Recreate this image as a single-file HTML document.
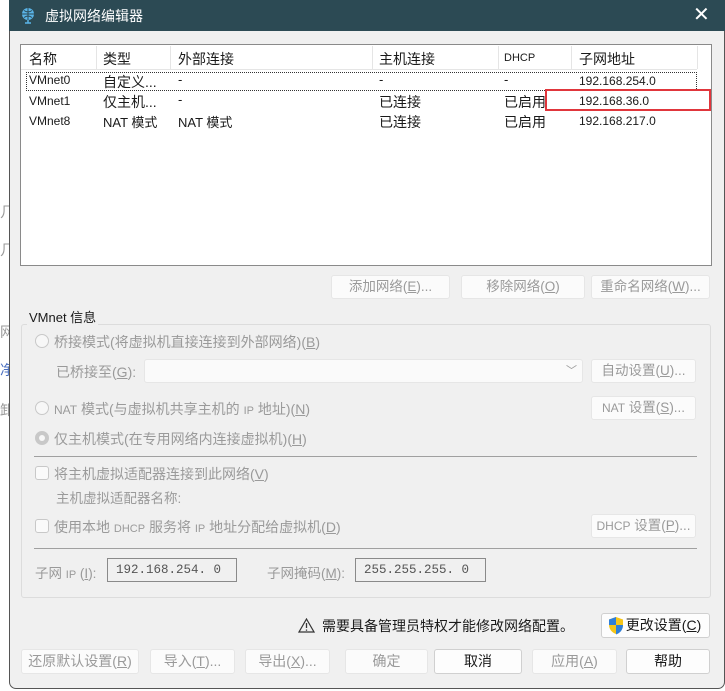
<!DOCTYPE html>
<html><head><meta charset="utf-8"><style>
*{margin:0;padding:0;box-sizing:border-box}
body{width:725px;height:691px;background:#fff;position:relative;overflow:hidden;font-family:"Liberation Sans","Noto Sans CJK SC",sans-serif;font-size:13px;color:#1a1a1a}
.a{position:absolute;white-space:nowrap}
.win{position:absolute;left:9px;top:0;width:716px;height:689px;background:#f0f0f0;border:1px solid #555;border-radius:0 0 7px 7px}
.title{position:absolute;left:9px;top:0;width:716px;height:31px;background:#2c4a54;color:#fff;font-size:14px}
.btn{position:absolute;background:#fbfbfb;border:1px solid #e6e6e6;border-radius:3px;text-align:center;color:#9a9a9a;font-size:13.5px;line-height:22px}
.btn.en{color:#1a1a1a;background:#fdfdfd;border-color:#d0d0d0}
.g{color:#9a9a9a}
.rad{position:absolute;width:14px;height:14px;border:1px solid #c8c8c8;border-radius:50%;background:#f7f7f7}
.chk{position:absolute;width:14px;height:14px;border:1px solid #c8c8c8;border-radius:3px;background:#fafafa}
.sep{position:absolute;height:1px;background:#a0a0a0}
.inp{position:absolute;border:1px solid #8a8a8a;background:#f0f0f0;font-family:"Liberation Mono",monospace;font-size:12.5px;color:#555;padding-left:8px;line-height:22px}
</style></head><body>
<div class="a g" style="left:0;top:202px;font-size:14px">几</div>
<div class="a g" style="left:0;top:240px;font-size:14px">几</div>
<div class="a g" style="left:0;top:322px;font-size:14px">网</div>
<div class="a" style="left:0;top:360px;font-size:14px;color:#4a6fc0">净</div>
<div class="a g" style="left:0;top:400px;font-size:14px">卸</div>
<div class="win"></div>
<div class="title">
<svg class="a" style="left:12px;top:7px" width="14" height="17" viewBox="0 0 14 17"><circle cx="7" cy="7" r="6" fill="#5ab4e8"/><path d="M1 7h12M7 1v12M3 3.5c3 2 5 2 8 0M3 10.5c3-2 5-2 8 0" stroke="#2c4a54" fill="none" stroke-width="1"/><path d="M7 13v3M4 16h6" stroke="#5ab4e8" stroke-width="1.5"/></svg>
<div class="a" style="left:36px;top:6px">虚拟网络编辑器</div>
<div class="a" style="left:684px;top:2px;font-size:20px;font-weight:300">✕</div>
</div>
<div class="a" style="left:20px;top:44px;width:692px;height:222px;background:#fff;border:1px solid #8a8a8a"></div>
<div class="a" style="left:21px;top:45px;width:676px;height:25px;border-bottom:1px solid #e5e5e5"></div>
<div class="a" style="left:96px;top:46px;width:1px;height:23px;background:#e5e5e5"></div>
<div class="a" style="left:170px;top:46px;width:1px;height:23px;background:#e5e5e5"></div>
<div class="a" style="left:372px;top:46px;width:1px;height:23px;background:#e5e5e5"></div>
<div class="a" style="left:498px;top:46px;width:1px;height:23px;background:#e5e5e5"></div>
<div class="a" style="left:571px;top:46px;width:1px;height:23px;background:#e5e5e5"></div>
<div class="a" style="left:697px;top:46px;width:1px;height:23px;background:#e5e5e5"></div>
<div class="a" style="left:29px;top:49px;font-size:14px">名称</div>
<div class="a" style="left:103px;top:49px;font-size:14px">类型</div>
<div class="a" style="left:178px;top:49px;font-size:14px">外部连接</div>
<div class="a" style="left:379px;top:49px;font-size:14px">主机连接</div>
<div class="a" style="left:504px;top:52px;font-size:11px">DHCP</div>
<div class="a" style="left:579px;top:49px;font-size:14px">子网地址</div>
<div class="a" style="left:26px;top:72px;width:671px;height:19px;border:1px dotted #333"></div>
<div class="a" style="left:29px;top:73px;font-size:12px">VMnet0</div>
<div class="a" style="left:103px;top:72px;font-size:14px">自定义...</div>
<div class="a" style="left:178px;top:72px">-</div>
<div class="a" style="left:379px;top:72px">-</div>
<div class="a" style="left:504px;top:72px">-</div>
<div class="a" style="left:579px;top:74px;font-size:12px">192.168.254.0</div>
<div class="a" style="left:29px;top:94px;font-size:12px">VMnet1</div>
<div class="a" style="left:103px;top:92px;font-size:14px">仅主机...</div>
<div class="a" style="left:178px;top:92px">-</div>
<div class="a" style="left:379px;top:92px;font-size:14px">已连接</div>
<div class="a" style="left:504px;top:92px;font-size:14px">已启用</div>
<div class="a" style="left:579px;top:94px;font-size:12px">192.168.36.0</div>
<div class="a" style="left:29px;top:114px;font-size:12px">VMnet8</div>
<div class="a" style="left:103px;top:112px;font-size:13px">NAT 模式</div>
<div class="a" style="left:178px;top:112px;font-size:13px">NAT 模式</div>
<div class="a" style="left:379px;top:112px;font-size:14px">已连接</div>
<div class="a" style="left:504px;top:112px;font-size:14px">已启用</div>
<div class="a" style="left:579px;top:114px;font-size:12px">192.168.217.0</div>
<div class="a" style="left:545px;top:89px;width:166px;height:22px;border:2px solid #e0363c"></div>
<div class="btn" style="left:331px;top:275px;width:119px;height:24px">添加网络(<u>E</u>)...</div>
<div class="btn" style="left:461px;top:275px;width:124px;height:24px">移除网络(<u>O</u>)</div>
<div class="btn" style="left:591px;top:275px;width:119px;height:24px">重命名网络(<u>W</u>)...</div>
<div class="a" style="left:21px;top:324px;width:690px;height:274px;border:1px solid #dcdcdc;border-radius:3px"></div>
<div class="a" style="left:27px;top:307px;background:#f0f0f0;padding:0 2px;font-size:13px">VMnet 信息</div>
<div class="rad" style="left:35px;top:334px"></div>
<div class="a g" style="left:54px;top:332px;font-size:14px">桥接模式(将虚拟机直接连接到外部网络)(<u>B</u>)</div>
<div class="a g" style="left:56px;top:362px;font-size:14px">已桥接至(<u>G</u>):</div>
<div class="a" style="left:144px;top:359px;width:439px;height:24px;background:#fafafa;border:1px solid #e6e6e6;border-radius:3px"></div>
<div class="a g" style="left:566px;top:362px;font-size:11px">﹀</div>
<div class="btn" style="left:591px;top:359px;width:105px;height:24px">自动设置(<u>U</u>)...</div>
<div class="rad" style="left:35px;top:401px"></div>
<div class="a g" style="left:54px;top:399px;font-size:14px"><span style="font-size:12px">NAT</span> 模式(与虚拟机共享主机的 <span style="font-size:11px">IP</span> 地址)(<u>N</u>)</div>
<div class="btn" style="left:591px;top:396px;width:105px;height:24px"><span style="font-size:12px">NAT</span> 设置(<u>S</u>)...</div>
<div class="rad" style="left:35px;top:431px;background:#c8c8c8"><div style="position:absolute;left:3px;top:3px;width:6px;height:6px;border-radius:50%;background:#f7f7f7"></div></div>
<div class="a g" style="left:54px;top:429px;font-size:14px">仅主机模式(在专用网络内连接虚拟机)(<u>H</u>)</div>
<div class="sep" style="left:34px;top:456px;width:663px"></div>
<div class="chk" style="left:35px;top:466px"></div>
<div class="a g" style="left:54px;top:464px;font-size:14px">将主机虚拟适配器连接到此网络(<u>V</u>)</div>
<div class="a g" style="left:56px;top:487px;font-size:13.5px">主机虚拟适配器名称:</div>
<div class="chk" style="left:35px;top:519px"></div>
<div class="a g" style="left:54px;top:517px;font-size:14px">使用本地 <span style="font-size:11px">DHCP</span> 服务将 <span style="font-size:11px">IP</span> 地址分配给虚拟机(<u>D</u>)</div>
<div class="btn" style="left:591px;top:514px;width:105px;height:24px"><span style="font-size:12px">DHCP</span> 设置(<u>P</u>)...</div>
<div class="sep" style="left:34px;top:548px;width:663px"></div>
<div class="a g" style="left:35px;top:562px;font-size:13.5px">子网 <span style="font-size:11px">IP</span> (<u>I</u>):</div>
<div class="inp" style="left:107px;top:558px;width:130px;height:24px">192.168.254. 0</div>
<div class="a g" style="left:267px;top:562px;font-size:13.5px">子网掩码(<u>M</u>):</div>
<div class="inp" style="left:355px;top:558px;width:131px;height:24px">255.255.255. 0</div>
<svg class="a" style="left:298px;top:618px" width="17" height="15" viewBox="0 0 17 15"><path d="M8.5 1L16 14H1z" fill="none" stroke="#333" stroke-width="1.2"/><path d="M8.5 5v5M8.5 11.5v1.2" stroke="#333" stroke-width="1.3"/></svg>
<div class="a" style="left:322px;top:616px;font-size:14px">需要具备管理员特权才能修改网络配置。</div>
<div class="btn en" style="left:601px;top:613px;width:109px;height:25px;font-size:14px;padding-left:16px">更改设置(<u>C</u>)</div>
<svg class="a" style="left:607px;top:616px" width="18" height="19" viewBox="0 0 18 19"><path d="M9 1L2 3.5v5c0 5 3 8 7 9.5 4-1.5 7-4.5 7-9.5v-5z" fill="#f5c518"/><path d="M9 1L2 3.5V9h7z" fill="#2f7fd8"/><path d="M9 9h7c0 5-3 8-7 9.5z" fill="#2f7fd8"/></svg>
<div class="btn" style="left:21px;top:649px;width:118px;height:25px;font-size:14px">还原默认设置(<u>R</u>)</div>
<div class="btn" style="left:150px;top:649px;width:85px;height:25px;font-size:14px">导入(<u>T</u>)...</div>
<div class="btn" style="left:245px;top:649px;width:85px;height:25px;font-size:14px">导出(<u>X</u>)...</div>
<div class="btn" style="left:345px;top:649px;width:83px;height:25px;font-size:14px">确定</div>
<div class="btn en" style="left:434px;top:649px;width:88px;height:25px;font-size:14px">取消</div>
<div class="btn" style="left:532px;top:649px;width:85px;height:25px;font-size:14px">应用(<u>A</u>)</div>
<div class="btn en" style="left:626px;top:649px;width:84px;height:25px;font-size:14px">帮助</div>
</body></html>
